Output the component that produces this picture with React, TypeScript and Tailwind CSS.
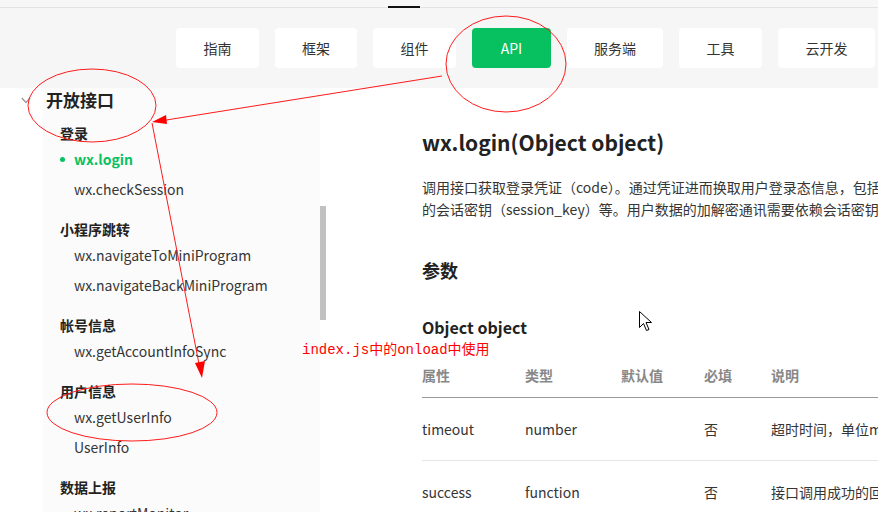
const tabs = [
  { label: "指南", w: "w-[83px]" },
  { label: "框架", w: "w-[82px]" },
  { label: "组件", w: "w-[83px]" },
  { label: "API", w: "w-[79px]", active: true },
  { label: "服务端", w: "w-[96px]" },
  { label: "工具", w: "w-[83px]" },
  { label: "云开发", w: "w-[97px]" },
];

const groups = [
  { title: "登录", items: ["wx.login", "wx.checkSession"] },
  { title: "小程序跳转", items: ["wx.navigateToMiniProgram", "wx.navigateBackMiniProgram"] },
  { title: "帐号信息", items: ["wx.getAccountInfoSync"] },
  { title: "用户信息", items: ["wx.getUserInfo", "UserInfo"] },
  { title: "数据上报", items: ["wx.reportMonitor"] },
];

const rows = [
  ["timeout", "number", "", "否", "超时时间，单位ms"],
  ["success", "function", "", "否", "接口调用成功的回调函数"],
];

const cols = ["w-[103px]", "w-[96px]", "w-[83px]", "w-[67px]", "flex-1"];

function Sidebar() {
  return (
    <div className="flex w-[320px] shrink-0">
      <div className="w-[43px] shrink-0 bg-white pt-[9px] pl-[21px]">
        <svg width="10" height="7" viewBox="0 0 10 7" fill="none">
          <path d="M0.8 1 L5 5.5 L9.2 1" stroke="#9a9a9a" strokeWidth="1.4" />
        </svg>
      </div>
      <div className="flex-1 bg-[#fbfbfb]">
        <div className="pl-[3px] h-[24px] leading-[24px] text-[17px] font-semibold text-[#222]">开放接口</div>
        {groups.map((g, gi) => (
          <div key={g.title} className={gi === 0 ? "mt-[11px]" : "mt-[15px]"}>
            <div className="pl-[17px] h-[21px] leading-[21px] text-[14px] font-semibold text-[#222]">
              {g.title}
            </div>
            {g.items.map((it) =>
              it === "wx.login" ? (
                <div key={it} className="flex items-center h-[30px] pl-[17px] text-[14px] font-bold text-[#07c160]">
                  <span className="w-[5px] h-[5px] rounded-full bg-[#07c160] mr-[9px]" />
                  {it}
                </div>
              ) : (
                <div key={it} className="h-[30px] leading-[30px] pl-[31px] text-[14px] text-[#353535]">
                  {it}
                </div>
              )
            )}
          </div>
        ))}
      </div>
    </div>
  );
}

function Content() {
  return (
    <div className="flex-1 min-w-0 overflow-hidden pl-[96px] pt-[40px] text-[#222]">
      <h1 className="text-[21px] leading-[28px] font-bold whitespace-nowrap">wx.login(Object object)</h1>
      <div className="mt-[20px] text-[14px] leading-[22px] text-[#353535] whitespace-nowrap">
        <p>调用接口获取登录凭证（code）。通过凭证进而换取用户登录态信息，包括用户在当前小程序的唯一标识（openid）</p>
        <p>的会话密钥（session_key）等。用户数据的加解密通讯需要依赖会话密钥完成。</p>
      </div>
      <h2 className="mt-[37px] text-[18px] leading-[26px] font-bold">参数</h2>
      <h3 className="mt-[33px] text-[16px] leading-[22px] font-bold">Object object</h3>
      <div className="mt-[16px] w-[520px]">
        <div className="flex pt-[10px] pb-[11px] leading-[22px] text-[14px] font-bold text-[#888] border-b border-[#999]">
          {["属性", "类型", "默认值", "必填", "说明"].map((h, i) => (
            <div key={h} className={cols[i] + " whitespace-nowrap"}>
              {h}
            </div>
          ))}
        </div>
        {rows.map((r) => (
          <div key={r[0]} className="flex py-[20px] leading-[22px] text-[14px] text-[#353535] border-b border-[#e5e5e5]">
            {r.map((c, i) => (
              <div key={i} className={cols[i] + " whitespace-nowrap"}>
                {c}
              </div>
            ))}
          </div>
        ))}
      </div>
    </div>
  );
}

function Annotations() {
  return (
    <>
      <svg className="absolute inset-0 pointer-events-none" width="878" height="512" viewBox="0 0 878 512">
        <g fill="none" stroke="#ff1a1a" strokeWidth="1">
          <ellipse cx="92" cy="105.5" rx="64" ry="36.5" />
          <ellipse cx="506" cy="64" rx="60" ry="48" />
          <ellipse cx="132" cy="412.5" rx="85" ry="28.5" />
          <line x1="442" y1="76" x2="160" y2="121" />
          <line x1="152" y1="123" x2="199" y2="364" />
        </g>
        <polygon points="152,122 166,115 167,124" fill="#ff0000" />
        <polygon points="202,378 195,363 205,361" fill="#ff0000" />
        <path
          d="M639.5 311.5 L639.5 327.5 L643.5 323.5 L646.5 330.5 L649 329.5 L646 322.5 L651.5 322.5 Z"
          fill="#fff"
          stroke="#000"
          strokeWidth="1"
        />
      </svg>
      <div className="absolute left-[302px] top-[340px] text-[14px] leading-[20px] text-[#ff0000] whitespace-nowrap font-['Liberation_Mono','Noto_Sans_CJK_SC',monospace]">
        index.js中的onload中使用
      </div>
    </>
  );
}

export default function App() {
  return (
    <div className="relative w-[878px] h-[512px] overflow-hidden bg-white font-['Noto_Sans_CJK_SC','Noto_Sans',sans-serif]">
      <div className="h-[8px] bg-[#f7f7f7] border-b border-[#e3e3e3] pl-[388px] pt-[6px]">
        <div className="w-[32px] h-[2px] bg-[#111]" />
      </div>
      <div className="h-[80px] bg-[#f6f6f6] flex gap-[16px] pl-[176px] pt-[20px]">
        {tabs.map((t) => (
          <div
            key={t.label}
            className={
              t.w +
              " h-[40px] shrink-0 rounded-[4px] flex items-center justify-center text-[14px] " +
              (t.active ? "bg-[#07c160] text-white" : "bg-white text-[#333]")
            }
          >
            {t.label}
          </div>
        ))}
      </div>
      <div className="flex h-[424px]">
        <Sidebar />
        <div className="w-[6px] shrink-0 pt-[118px]">
          <div className="h-[114px] bg-[#c1c1c1]" />
        </div>
        <Content />
      </div>
      <Annotations />
    </div>
  );
}
